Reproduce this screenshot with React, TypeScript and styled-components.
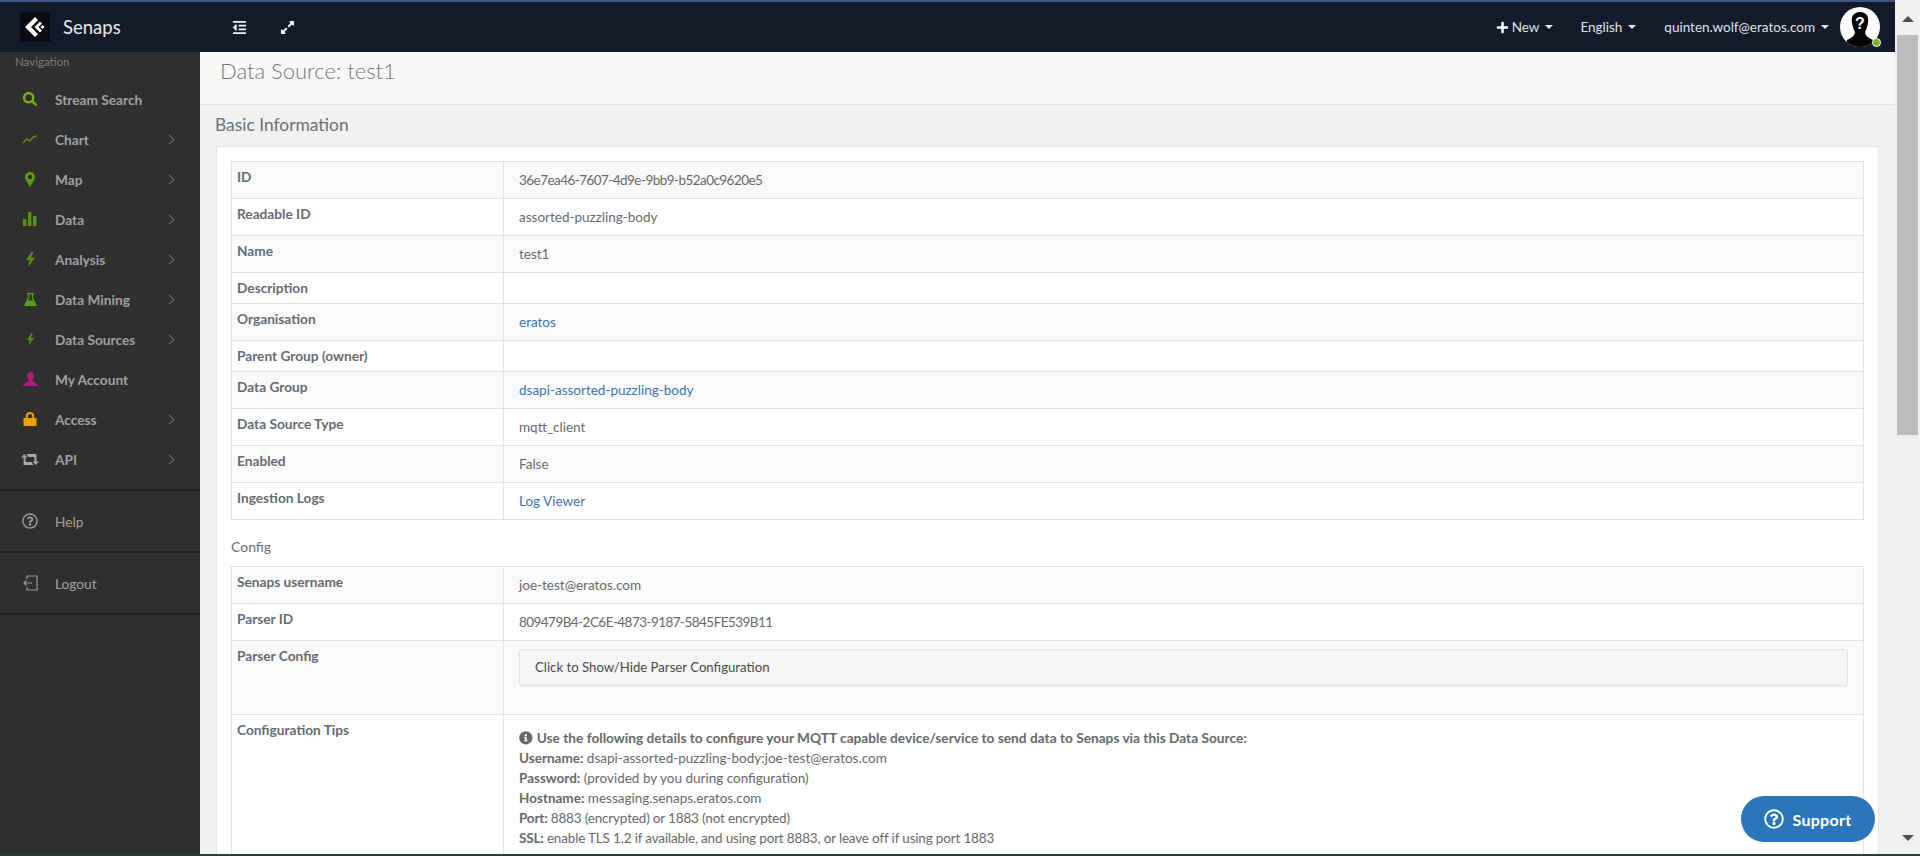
import React from "react";
import styled, { createGlobalStyle } from "styled-components";
import { FaSearch, FaRegQuestionCircle, FaInfoCircle, FaPlus, FaOutdent, FaExpandAlt } from "react-icons/fa";

const Global = createGlobalStyle`
  html, body { margin: 0; padding: 0; height: 100%; overflow: hidden; background: #2b3a3a; }
  * { box-sizing: border-box; }
  body { font-family: "Lato", "Liberation Sans", sans-serif; font-size: 13.5px; color: #666; }
`;

const Page = styled.div`
  height: 854px; display: flex; flex-direction: row; overflow: hidden; position: relative;
`;
const Main = styled.div`
  flex: 1; min-width: 0; display: flex; flex-direction: column;
`;
const Header = styled.header`
  height: 52px; flex: none; background: #131b2b; border-top: 2px solid #3a5580;
  display: flex; align-items: center; color: #e4e6ea;
`;
const Brand = styled.div`
  width: 200px; flex: none; display: flex; align-items: center; padding-left: 20px; gap: 13px;
`;
const LogoBox = styled.div`
  width: 30px; height: 30px; background: #0b0c10; display: flex; align-items: center; justify-content: center;
`;
const BrandName = styled.span`
  font-size: 18.5px; font-weight: 400; color: #e6e8eb;
`;
const ToolIcon = styled.span<{ $ml: number }>`
  display: flex; color: #f2f2f2; font-size: 15px; margin-left: ${(p) => p.$ml}px;
`;
const Spacer = styled.div`flex: 1;`;
const NavItem = styled.span<{ $ml: number }>`
  display: flex; align-items: center; margin-left: ${(p) => p.$ml}px; font-size: 13.5px; color: #dfe2e6; white-space: nowrap;
`;
const Caret = styled.span`
  margin-left: 6px; width: 0; height: 0; border-left: 4px solid transparent; border-right: 4px solid transparent;
  border-top: 4px solid #e4e6ea;
`;
const PlusIcon = styled(FaPlus)`
  font-size: 13px; margin-right: 3px; color: #fff;
`;
const AvatarWrap = styled.div`
  position: relative; width: 40px; height: 40px; margin: 0 15px 0 11px; flex: none;
`;
const Dot = styled.span`
  position: absolute; right: -1px; bottom: 0px; width: 9px; height: 9px; border-radius: 50%;
  background: #7ab317; border: 1px solid #fff;
`;
const Body = styled.div`
  flex: 1; min-height: 0; display: flex;
`;
const Side = styled.aside`
  width: 200px; flex: none; background: #2f2f2f; display: flex; flex-direction: column;
`;
const SideTitle = styled.div`
  height: 27px; padding: 1px 0 0 15px; font-size: 11.5px; line-height: 17px; color: #7f7f7f;
`;
const SideItem = styled.div<{ $light?: boolean; $tall?: boolean }>`
  height: ${(p) => (p.$tall ? 60 : 40)}px; display: flex; align-items: center; flex: none;
  color: #a0a0a0; font-weight: ${(p) => (p.$light ? 400 : 700)}; font-size: 13.7px;
`;
const IconSlot = styled.span<{ $c: string; $s?: number }>`
  width: 60px; flex: none; display: flex; justify-content: center;
  color: ${(p) => p.$c}; font-size: ${(p) => p.$s ?? 15}px;
`;
const ItemLabel = styled.span`
  margin-left: -5px; flex: 1;
`;
const Chevron = styled.svg`
  width: 7px; height: 11px; margin-right: 25px; flex: none;
`;
const SideNavList = styled.nav`
  display: flex; flex-direction: column; padding-bottom: 10px;
`;
const Sep = styled.div`
  height: 2px; background: #222; flex: none;
`;
const Content = styled.main`
  flex: 1; min-width: 0; background: #f1f1f1; overflow: hidden;
`;
const TitleBand = styled.div`
  height: 53px; background: #f8f8f8; border-bottom: 1px solid #e4e4e4; padding: 4px 0 0 20px;
`;
const Title = styled.h1`
  margin: 0; font-size: 22px; line-height: 30px; font-weight: 300; color: #73787f;
`;
const SectionHead = styled.h2`
  margin: 0; padding: 0 15px; height: 41px; font-size: 17.4px; line-height: 40px; font-weight: 400; color: #6d7075;
`;
const Panel = styled.section`
  margin: 0 16px; background: #fff; border: 1px solid #e6e6e6; padding: 14px;
`;
const Table = styled.table`
  width: 100%; border-collapse: collapse; border: 1px solid #e2e2e2; table-layout: fixed;
`;
const Row = styled.tr`
  &:nth-child(odd) { background: #fafafa; }
`;
const Th = styled.th`
  width: 272px; border: 1px solid #e2e2e2; padding: 5px 5px; text-align: left; vertical-align: top;
  font-weight: 700; line-height: 20px; font-size: 13.7px; color: #666b73;
`;
const Td = styled.td`
  border: 1px solid #e2e2e2; padding: 8px 15px; line-height: 20px; vertical-align: top; color: #696969; font-size: 13.5px;
`;
const Link = styled.a`
  color: #3f74ae; text-decoration: none;
`;
const Hex = styled.span`
  letter-spacing: -0.55px;
`;
const ConfigHead = styled.div`
  height: 46px; padding-top: 17px; line-height: 20px; color: #6d7075; font-size: 14px;
`;
const Disclosure = styled.div`
  height: 37px; margin-bottom: 20px; background: #f6f6f6; border: 1px solid #e4e4e4; border-radius: 3px;
  padding: 0 15px; line-height: 35px; color: #4a4a4a; font-size: 13.2px; box-shadow: 0 1px 1px rgba(0,0,0,.05);
`;
const Tips = styled.div`
  margin-top: 5px;
`;
const TipHead = styled.div`
  font-weight: 700; font-size: 13.7px; display: flex; align-items: center; gap: 4px;
`;
const TipLine = styled.div<{ $tight?: boolean }>`
  letter-spacing: ${(p) => (p.$tight ? "-0.17px" : "0")};
`;
const Scroll = styled.div`
  width: 25px; flex: none; background: #f1f1f1; display: flex; flex-direction: column; align-items: center;
  padding-top: 2px; height: 854px;
`;
const ArrowBtn = styled.div<{ $down?: boolean }>`
  height: 33px; width: 100%; display: flex; justify-content: center; align-items: center; flex: none;
  &::before {
    content: ""; border-left: 6px solid transparent; border-right: 6px solid transparent;
    ${(p) => (p.$down ? "border-top: 6px solid #505050;" : "border-bottom: 6px solid #505050;")}
  }
`;
const Thumb = styled.div`
  width: 21px; height: 400px; background: #bdbdbd; flex: none;
`;
const ScrollGap = styled.div`flex: 1;`;
const Support = styled.div`
  position: absolute; left: 1741px; top: 796px; width: 134px; height: 46px; border-radius: 23px; background: #2b76b9;
  color: #fff; display: flex; align-items: center; justify-content: center; gap: 8px;
  font-weight: 700; font-size: 16px; letter-spacing: 0.3px;
`;

const Logo = () => (
  <svg width="22" height="22" viewBox="0 0 22 22">
    <path d="M11 1 L14 4 L7 11 L14 18 L11 21 L1 11 Z" fill="#fff" />
    <path d="M16 5.5 L18 7.5 L14.5 11 L18 14.5 L16 16.5 L10.5 11 Z" fill="#fff" />
    <path d="M18.5 9 L20.5 11 L18.5 13 L16.5 11 Z" fill="#fff" />
  </svg>
);
const Avatar = () => (
  <svg width="40" height="40" viewBox="0 0 40 40">
    <defs><clipPath id="ac"><circle cx="20" cy="20" r="20" /></clipPath></defs>
    <circle cx="20" cy="20" r="20" fill="#fff" />
    <g clipPath="url(#ac)">
      <path d="M20 5 C13 5 11 10 12 16 C12.5 20 14 23 15 25 C15 28 13 30 7 33 L5 40 L35 40 L33 33 C27 30 25 28 25 25 C26 23 27.5 20 28 16 C29 10 27 5 20 5 Z" fill="#050505" />
    </g>
    <text x="20" y="22" textAnchor="middle" fill="#fff" fontSize="16" fontWeight="700" fontFamily="Liberation Sans, sans-serif">?</text>
  </svg>
);
const ChartIcon = () => (
  <svg width="16" height="12" viewBox="0 0 16 12"><polyline points="1,10 5,6 8,8 11,4 15,3" fill="none" stroke="currentColor" strokeWidth="1.4" /></svg>
);
const BarsIcon = () => (
  <svg width="14" height="14" viewBox="0 0 14 14" fill="currentColor"><rect x="0" y="7" width="3.4" height="7" /><rect x="5" y="0" width="3.4" height="14" /><rect x="10" y="4" width="3.4" height="10" /></svg>
);
const PinIcon = () => (
  <svg width="10" height="15" viewBox="0 0 10 15"><path fillRule="evenodd" fill="currentColor" d="M5 0 C2 0 0 2.2 0 5 C0 8 3 11 5 15 C7 11 10 8 10 5 C10 2.2 8 0 5 0 Z M5 2.8 A2.2 2.2 0 1 1 5 7.2 A2.2 2.2 0 1 1 5 2.8 Z" /></svg>
);
const BoltIcon = ({ w = 11, h = 15 }: { w?: number; h?: number }) => (
  <svg width={w} height={h} viewBox="0 0 11 15"><path fill="currentColor" d="M6.5 0 L1 8 L4.5 8 L3 15 L10 5.5 L6 5.5 L8.5 0 Z" /></svg>
);
const FlaskIcon = () => (
  <svg width="13" height="13" viewBox="0 0 13 13"><path fill="currentColor" fillRule="evenodd" d="M3 0 H10 V1.2 H9 V4.5 L13 13 H0 L4 4.5 V1.2 H3 Z M5.2 1.2 V5 L4 7.5 H9 L7.8 5 V1.2 Z" /></svg>
);
const UserIcon = () => (
  <svg width="15" height="14" viewBox="0 0 15 14"><path fill="currentColor" d="M7.5 0 C5 0 4 1.6 4 3.6 C4 5.4 4.7 7 5.6 7.8 C5.6 9 5 9.6 3.4 10.4 C1.8 11.2 0.4 12 0 14 H15 C14.6 12 13.2 11.2 11.6 10.4 C10 9.6 9.4 9 9.4 7.8 C10.3 7 11 5.4 11 3.6 C11 1.6 10 0 7.5 0 Z" /></svg>
);
const LockIcon = () => (
  <svg width="14" height="14" viewBox="0 0 14 14"><path fill="currentColor" fillRule="evenodd" d="M0.5 6 H2.8 V4 C2.8 1.6 4.6 0 7 0 C9.4 0 11.2 1.6 11.2 4 V6 H13.5 V14 H0.5 Z M4.8 6 H9.2 V4 C9.2 2.7 8.3 1.9 7 1.9 C5.7 1.9 4.8 2.7 4.8 4 Z" /></svg>
);
const RetweetIcon = () => (
  <svg width="18" height="11" viewBox="0 0 18 11"><path fill="currentColor" d="M3.2 0 L6.4 3.4 H4.6 V8 H10.6 L12.6 11 H2.6 V3.4 H0 Z M5.4 0 H15.4 V7.6 H18 L14.8 11 L11.6 7.6 H13.4 V3 H7.4 Z" /></svg>
);
const LogoutIcon = () => (
  <svg width="16" height="16" viewBox="0 0 16 16" fill="none" stroke="currentColor" strokeWidth="1.2"><path d="M5 4 V1 H15 V15 H5 V12" /><path d="M10 8 H2 M4.5 5.5 L2 8 L4.5 10.5" /></svg>
);
const Chev = () => (
  <Chevron viewBox="0 0 7 11"><polyline points="1,1 6,5.5 1,10" fill="none" stroke="#858585" strokeWidth="1" /></Chevron>
);

type Item = { label: string; icon: React.ReactNode; c: string; s?: number; chev?: boolean };
const items: Item[] = [
  { label: "Stream Search", icon: <FaSearch />, c: "#7ab317", s: 14 },
  { label: "Chart", icon: <ChartIcon />, c: "#5f9014", chev: true },
  { label: "Map", icon: <PinIcon />, c: "#5f9a14", chev: true },
  { label: "Data", icon: <BarsIcon />, c: "#5b9212", chev: true },
  { label: "Analysis", icon: <BoltIcon />, c: "#55900f", chev: true },
  { label: "Data Mining", icon: <FlaskIcon />, c: "#5f9a14", chev: true },
  { label: "Data Sources", icon: <BoltIcon w={9} h={15} />, c: "#55900f", chev: true },
  { label: "My Account", icon: <UserIcon />, c: "#a8207f" },
  { label: "Access", icon: <LockIcon />, c: "#e9a200", chev: true },
  { label: "API", icon: <RetweetIcon />, c: "#a8a8a8", chev: true },
];

const basic: [string, React.ReactNode][] = [
  ["ID", <Hex>36e7ea46-7607-4d9e-9bb9-b52a0c9620e5</Hex>],
  ["Readable ID", "assorted-puzzling-body"],
  ["Name", "test1"],
  ["Description", ""],
  ["Organisation", <Link>eratos</Link>],
  ["Parent Group (owner)", ""],
  ["Data Group", <Link>dsapi-assorted-puzzling-body</Link>],
  ["Data Source Type", "mqtt_client"],
  ["Enabled", "False"],
  ["Ingestion Logs", <Link>Log Viewer</Link>],
];

export default function App() {
  return (
    <>
      <Global />
      <Page>
        <Main>
          <Header>
            <Brand>
              <LogoBox><Logo /></LogoBox>
              <BrandName>Senaps</BrandName>
            </Brand>
            <ToolIcon $ml={32}><FaOutdent /></ToolIcon>
            <ToolIcon $ml={33}><FaExpandAlt /></ToolIcon>
            <Spacer />
            <NavItem $ml={0}><PlusIcon />New<Caret /></NavItem>
            <NavItem $ml={27}>English<Caret /></NavItem>
            <NavItem $ml={28}>quinten.wolf@eratos.com<Caret /></NavItem>
            <AvatarWrap><Avatar /><Dot /></AvatarWrap>
          </Header>
          <Body>
            <Side>
              <SideTitle>Navigation</SideTitle>
              <SideNavList>
                {items.map((it) => (
                  <SideItem key={it.label}>
                    <IconSlot $c={it.c} $s={it.s}>{it.icon}</IconSlot>
                    <ItemLabel>{it.label}</ItemLabel>
                    {it.chev && <Chev />}
                  </SideItem>
                ))}
              </SideNavList>
              <Sep />
              <SideItem $light $tall>
                <IconSlot $c="#9a9a9a" $s={16}><FaRegQuestionCircle /></IconSlot>
                <ItemLabel>Help</ItemLabel>
              </SideItem>
              <Sep />
              <SideItem $light $tall>
                <IconSlot $c="#9a9a9a"><LogoutIcon /></IconSlot>
                <ItemLabel>Logout</ItemLabel>
              </SideItem>
              <Sep />
            </Side>
            <Content>
              <TitleBand><Title>Data Source: test1</Title></TitleBand>
              <SectionHead>Basic Information</SectionHead>
              <Panel>
                <Table>
                  <tbody>
                    {basic.map(([k, v]) => (
                      <Row key={k}><Th>{k}</Th><Td>{v}</Td></Row>
                    ))}
                  </tbody>
                </Table>
                <ConfigHead>Config</ConfigHead>
                <Table>
                  <tbody>
                    <Row><Th>Senaps username</Th><Td>joe-test@eratos.com</Td></Row>
                    <Row><Th>Parser ID</Th><Td><Hex>809479B4-2C6E-4873-9187-5845FE539B11</Hex></Td></Row>
                    <Row><Th>Parser Config</Th><Td><Disclosure>Click to Show/Hide Parser Configuration</Disclosure></Td></Row>
                    <Row>
                      <Th>Configuration Tips</Th>
                      <Td>
                        <Tips>
                          <TipHead><FaInfoCircle />Use the following details to configure your MQTT capable device/service to send data to Senaps via this Data Source:</TipHead>
                          <TipLine><b>Username:</b> dsapi-assorted-puzzling-body:joe-test@eratos.com</TipLine>
                          <TipLine><b>Password:</b> (provided by you during configuration)</TipLine>
                          <TipLine><b>Hostname:</b> messaging.senaps.eratos.com</TipLine>
                          <TipLine $tight><b>Port:</b> 8883 (encrypted) or 1883 (not encrypted)</TipLine>
                          <TipLine $tight><b>SSL:</b> enable TLS 1.2 if available, and using port 8883, or leave off if using port 1883</TipLine>
                        </Tips>
                      </Td>
                    </Row>
                  </tbody>
                </Table>
              </Panel>
            </Content>
          </Body>
        </Main>
        <Scroll>
          <ArrowBtn />
          <Thumb />
          <ScrollGap />
          <ArrowBtn $down />
        </Scroll>
        <Support><FaRegQuestionCircle size={20} />Support</Support>
      </Page>
    </>
  );
}
